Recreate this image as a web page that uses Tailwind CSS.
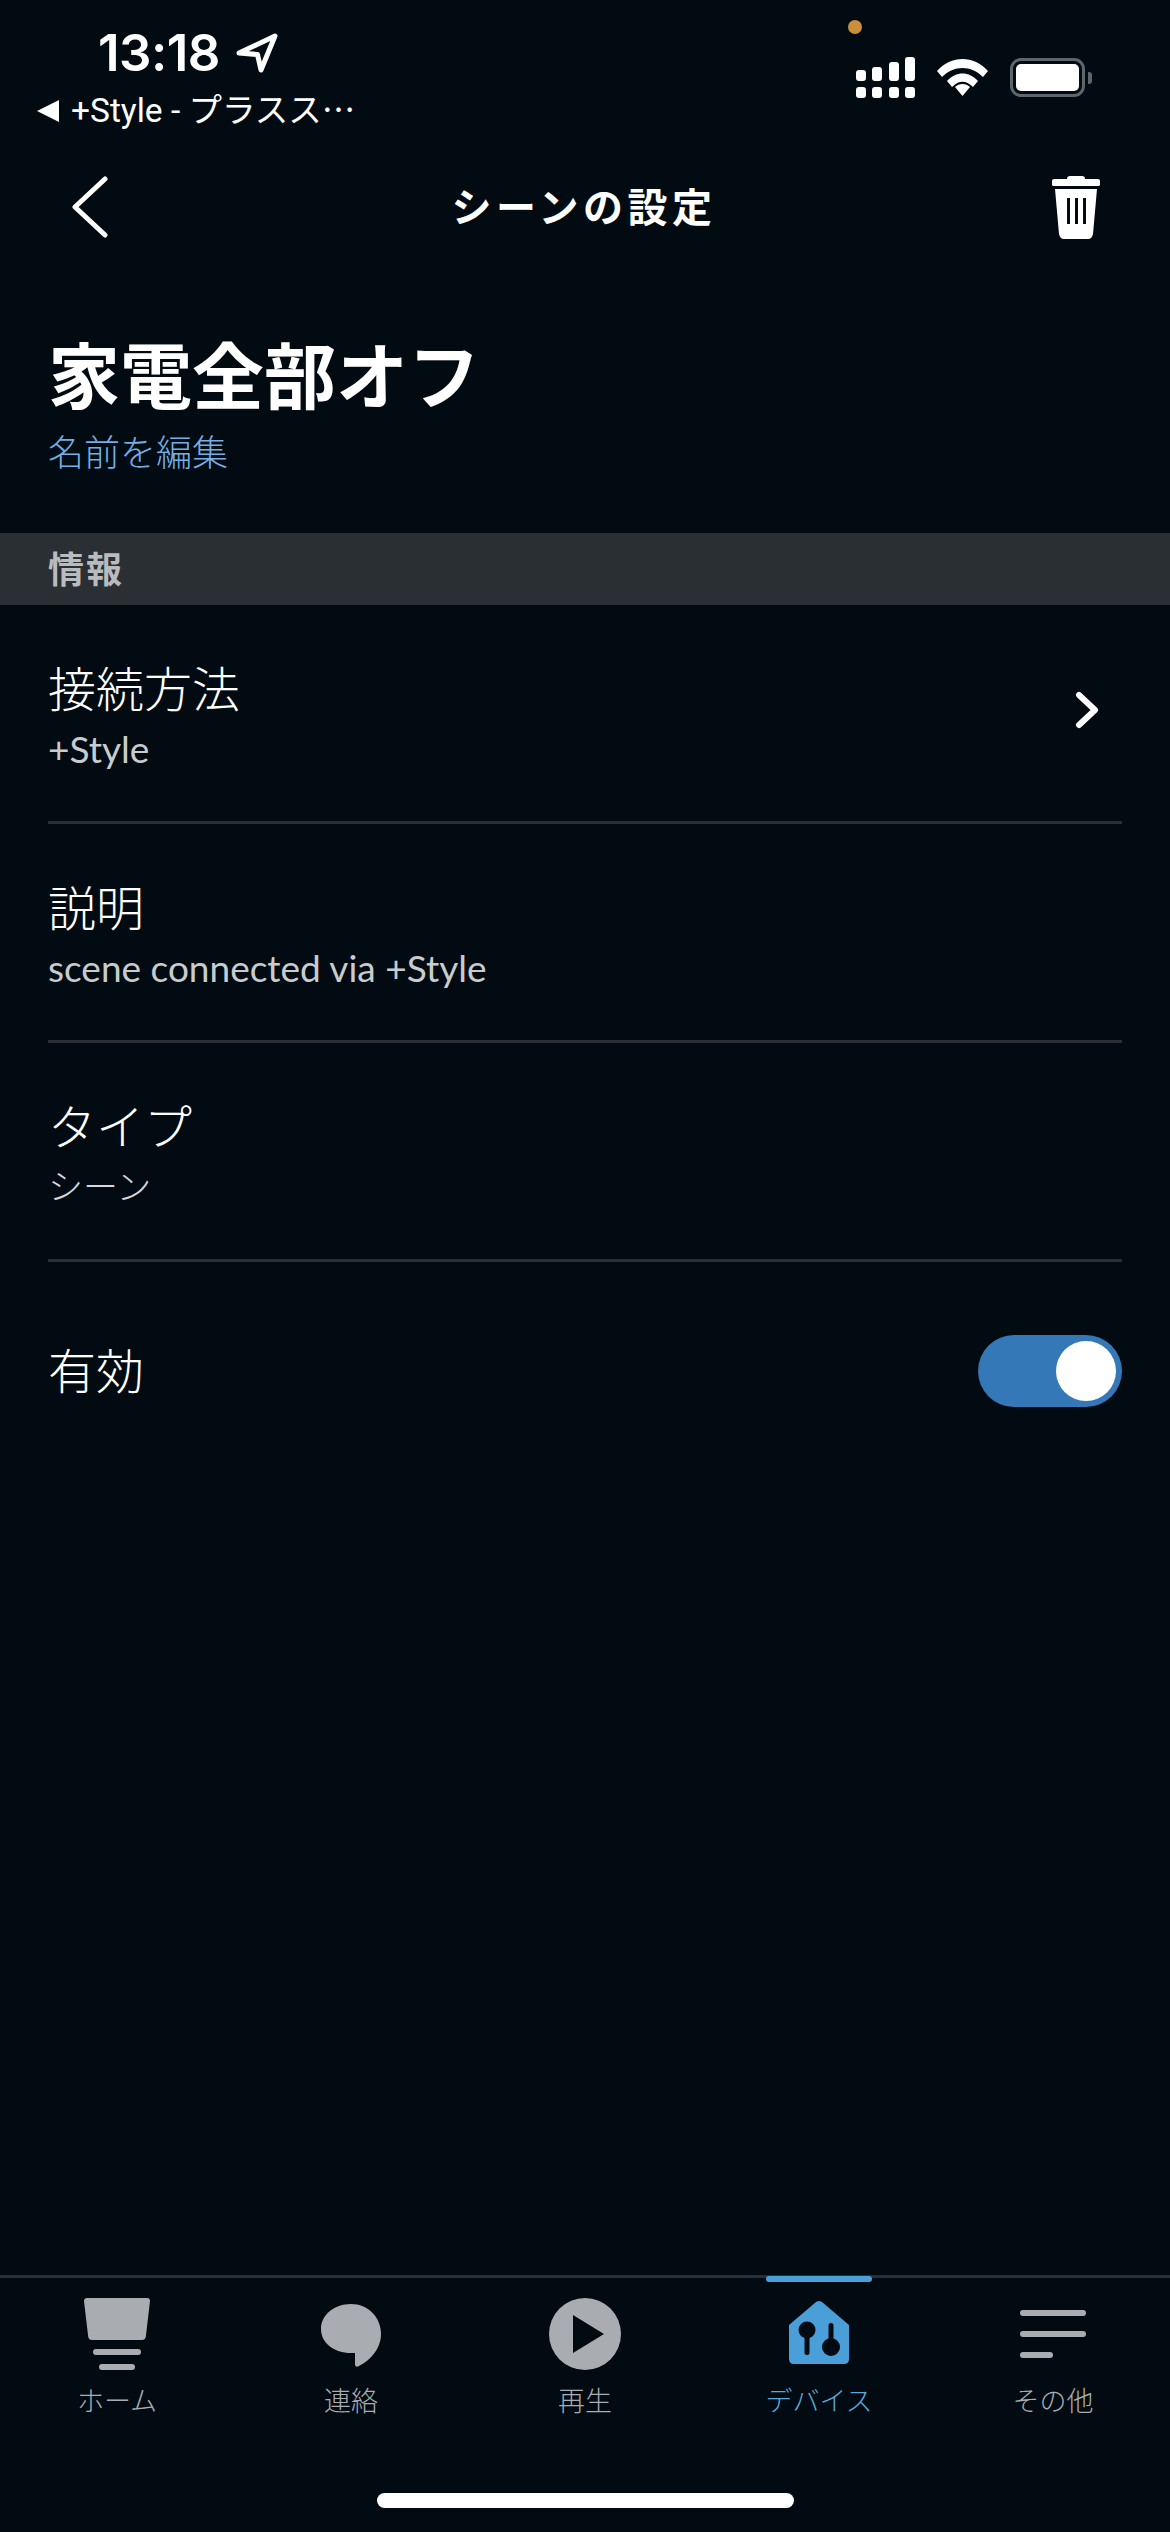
<!DOCTYPE html>
<html lang="ja">
<head>
<meta charset="utf-8">
<script src="https://cdn.jsdelivr.net/npm/@tailwindcss/browser@4"></script>
</head>
<body class="bg-[#020b12]">
<div class="w-[1170px] h-[2532px] bg-[#020b12] text-white flex flex-col overflow-hidden font-['Noto_Sans','Noto_Sans_CJK_JP',sans-serif]">

  <!-- status bar -->
  <div class="h-[150px] shrink-0 relative flex justify-between">
    <div class="pl-[37px] pt-[28px] flex flex-col">
      <div class="flex items-center pl-[61px] h-[50px]">
        <span class="font-['Inter',sans-serif] font-semibold text-[51px] leading-[50px] tracking-[-0.5px]">13:18</span>
        <svg class="ml-[16px]" width="42" height="42" viewBox="0 0 42 42" fill="none"><path d="M3 21 L39 4 L25 38 L21.5 22.5 Z" stroke="#fff" stroke-width="5" stroke-linejoin="round"/></svg>
      </div>
      <div class="flex items-center mt-[8px] h-[50px]">
        <svg width="22" height="22" viewBox="0 0 22 22"><path d="M0 11 L22 0 V22 Z" fill="#fff"/></svg>
        <span class="ml-[12px] text-[33.5px] leading-[50px] font-normal whitespace-nowrap font-['Roboto','Noto_Sans_CJK_JP',sans-serif]">+Style - プラスス⋯</span>
      </div>
    </div>
    <div class="pr-[78px] pt-[57px] flex items-start">
      <svg width="59" height="41" viewBox="0 0 59 41" fill="#fff">
        <rect x="0" y="13" width="10" height="11" rx="3"/><rect x="16" y="10" width="10" height="14" rx="3"/><rect x="33" y="5" width="10" height="19" rx="3"/><rect x="49" y="0" width="10" height="24" rx="3"/>
        <rect x="0" y="30" width="10" height="11" rx="3"/><rect x="16" y="30" width="10" height="11" rx="3"/><rect x="33" y="30" width="10" height="11" rx="3"/><rect x="49" y="30" width="10" height="11" rx="3"/>
      </svg>
      <svg class="ml-[22px] mt-[2px]" width="51" height="37" viewBox="0 0 51 37" fill="#fff">
        <path d="M0 12 C14 -4 37 -4 51 12 L46 18 C34 6 17 6 5 18 Z"/>
        <path d="M10 23 C19 13 32 13 41 23 L36 29 C29 22 22 22 15 29 Z" transform="translate(0 -1)"/>
        <path d="M18 28 C22 24 29 24 33 28 L25.500 37 Z"/>
      </svg>
      <div class="ml-[22px] mt-[1px] w-[75px] h-[39px] border-[3px] border-[#5e666c] rounded-[11px] p-[3px]">
        <div class="w-full h-full bg-white rounded-[5px]"></div>
      </div>
      <div class="ml-[3px] mt-[15px] w-[4px] h-[12px] rounded-r-[3px] bg-[#5e666c]"></div>
      <div class="absolute left-[848px] top-[20px] w-[14px] h-[14px] rounded-full bg-[#c98f3a]"></div>
    </div>
  </div>

  <!-- nav bar -->
  <div class="h-[114px] shrink-0 flex items-center justify-between pl-[72px] pr-[70px]">
    <svg width="36" height="62" viewBox="0 0 36 62" fill="none"><path d="M33 3 L3 31 L33 59" stroke="#fff" stroke-width="5" stroke-linecap="round" stroke-linejoin="round"/></svg>
    <div class="text-[40px] leading-[56px] font-bold tracking-[4.5px] ml-[8px]">シーンの設定</div>
    <svg width="48" height="63" viewBox="0 0 48 63" fill="#fff">
      <path d="M18 0 H30 Q33 0 33 3 H46 Q48 3 48 5 V9 Q48 10 46 10 H2 Q0 10 0 9 V5 Q0 3 2 3 H15 Q15 0 18 0 Z"/>
      <path fill-rule="evenodd" d="M3 13 H45 L41 58 Q40 63 36 63 H12 Q8 63 7 58 Z M15 22 V48 H18 V22 Z M23 22 V48 H26 V22 Z M31 22 V48 H34 V22 Z"/>
    </svg>
  </div>

  <!-- heading -->
  <div class="h-[269px] shrink-0 px-[48px] pt-[64px]">
    <h1 class="text-[72px] leading-[94px] font-bold whitespace-nowrap">家電全部オフ</h1>
    <div class="text-[36px] leading-[50px] font-light text-[#74aee4] mt-[6px]">名前を編集</div>
  </div>

  <!-- section band -->
  <div class="h-[72px] shrink-0 bg-[#292f33] px-[48px] flex items-center text-[36px] font-bold text-[#b8bcbf] tracking-[2px] pt-[2px]">情報</div>

  <!-- rows -->
  <div class="px-[48px] flex flex-col">
    <div class="h-[219px] border-b-[3px] border-[#292f33] flex items-center justify-between">
      <div class="pt-[1px]">
        <div class="text-[48px] leading-[70px] font-light">接続方法</div>
        <div class="text-[37px] leading-[50px] text-[#c9cccf] font-['Lato',sans-serif]">+Style</div>
      </div>
      <svg class="mr-[23px] mb-[6px]" width="24" height="38" viewBox="0 0 24 38" fill="none"><path d="M4 4 L20 19 L4 34" stroke="#fff" stroke-width="6" stroke-linecap="round" stroke-linejoin="round"/></svg>
    </div>
    <div class="h-[219px] border-b-[3px] border-[#292f33] flex items-center">
      <div class="pt-[1px]">
        <div class="text-[48px] leading-[70px] font-light">説明</div>
        <div class="text-[37px] leading-[50px] text-[#c9cccf] font-['Lato',sans-serif]">scene connected via +Style</div>
      </div>
    </div>
    <div class="h-[219px] border-b-[3px] border-[#292f33] flex items-center">
      <div class="pt-[1px]">
        <div class="text-[48px] leading-[70px] font-light">タイプ</div>
        <div class="text-[35px] leading-[50px] text-[#d6d8da] font-light">シーン</div>
      </div>
    </div>
    <div class="h-[218px] flex items-center justify-between">
      <div class="text-[48px] leading-[70px] font-light">有効</div>
      <div class="w-[144px] h-[72px] rounded-full bg-[#3578b8] flex items-center justify-end pr-[6px]">
        <div class="w-[60px] h-[60px] rounded-full bg-white"></div>
      </div>
    </div>
  </div>

  <div class="flex-1"></div>

  <!-- tab bar -->
  <div class="h-[257px] shrink-0 border-t-[3px] border-[#292f33] relative">
    <div class="absolute left-[766px] top-[-2px] w-[106px] h-[6px] rounded-full bg-[#4a9fd8]"></div>
    <div class="flex h-[150px]">
      <div class="flex-1 flex flex-col items-center text-[#a9adb1]">
        <div class="h-[94px] pt-[20px]">
          <svg class="block" width="66" height="72" viewBox="0 0 66 72" fill="#a9adb1">
            <path d="M3 0 H63 Q66 0 66 3 L62 37 Q62 42 58 42 H8 Q4 42 4 37 L0 3 Q0 0 3 0 Z"/>
            <rect x="9" y="51" width="48" height="6" rx="3"/><rect x="15" y="66" width="36" height="6" rx="3"/>
          </svg>
        </div>
        <div class="text-[27px] leading-[38px] font-light mt-[10px]">ホーム</div>
      </div>
      <div class="flex-1 flex flex-col items-center text-[#a9adb1]">
        <div class="h-[94px] pt-[26px]">
          <svg class="block" width="60" height="63" viewBox="0 0 60 63" fill="#a9adb1">
            <path d="M30 0 C47 0 60 13 60 30 C60 44 50 56 38 62 Q35 64 34 61 V49 C33 49 31 49 30 49 C13 49 0 39 0 25 C0 11 13 0 30 0 Z"/>
          </svg>
        </div>
        <div class="text-[27px] leading-[38px] font-light mt-[10px]">連絡</div>
      </div>
      <div class="flex-1 flex flex-col items-center text-[#a9adb1]">
        <div class="h-[94px] pt-[20px]">
          <svg class="block" width="72" height="72" viewBox="0 0 72 72">
            <circle cx="36" cy="36" r="36" fill="#a9adb1"/>
            <path d="M24 17 L55 36 L24 55 Z" fill="#020b12"/>
          </svg>
        </div>
        <div class="text-[27px] leading-[38px] font-light mt-[10px]">再生</div>
      </div>
      <div class="flex-1 flex flex-col items-center text-[#5aa8dc]">
        <div class="h-[94px] pt-[23px]">
          <svg class="block" width="60" height="63" viewBox="0 0 60 63">
            <path d="M27 1 Q30 -1 33 1 L60 24 V58 Q60 63 55 63 H5 Q0 63 0 58 V24 Z" fill="#4a9fd8"/>
            <circle cx="18" cy="29" r="8.500" fill="#020b12"/>
            <rect x="15.500" y="30" width="5" height="24" rx="2.500" fill="#020b12"/>
            <circle cx="42" cy="46" r="9" fill="#020b12"/>
            <rect x="39.500" y="22" width="5" height="24" rx="2.500" fill="#020b12"/>
          </svg>
        </div>
        <div class="text-[27px] leading-[38px] font-light mt-[10px]">デバイス</div>
      </div>
      <div class="flex-1 flex flex-col items-center text-[#a9adb1]">
        <div class="h-[94px] pt-[32px]">
          <div class="w-[66px] flex flex-col gap-[15px]">
            <div class="h-[6px] rounded-full bg-[#a9adb1]"></div>
            <div class="h-[6px] rounded-full bg-[#a9adb1]"></div>
            <div class="h-[6px] w-[33px] rounded-full bg-[#a9adb1]"></div>
          </div>
        </div>
        <div class="text-[27px] leading-[38px] font-light mt-[10px]">その他</div>
      </div>
    </div>
    <div class="flex justify-center mt-[65px]">
      <div class="w-[417px] h-[15px] rounded-full bg-white"></div>
    </div>
  </div>
</div>
</body>
</html>
